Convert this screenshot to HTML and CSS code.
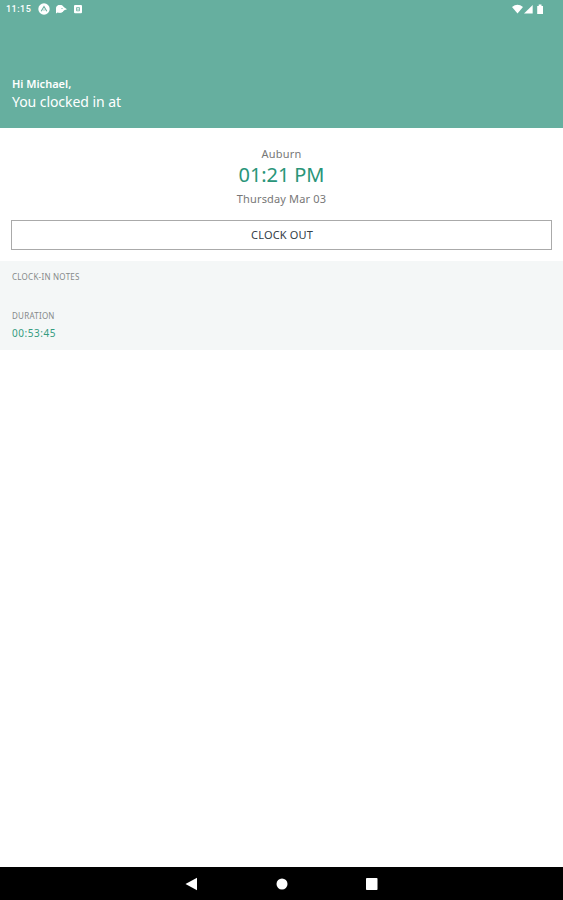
FILE: index.html
```html
<!DOCTYPE html>
<html lang="en">
<head>
<meta charset="utf-8">
<title>Time clock</title>
<link rel="stylesheet" href="styles.css">
</head>
<body>
<header class="header">
  <div class="status">
    <span class="clock">11:15</span>
    <svg class="notifications" width="46" height="12" viewBox="0 0 46 12">
      <circle cx="6" cy="6" r="5.7" fill="#fff"/>
      <path d="M3.2 8.2 6 3.5l2.8 4.7M6 6.6v.8" fill="none" stroke="#66af9f" stroke-width="1.1"/>
      <path d="M18 10.5V5.800a4 4 0 0 1 7.300-2.100L29 6.300 25.700 7.600A4 4 0 0 1 22 9.500h-2.500z" fill="#fff"/>
      <circle cx="22" cy="5.800" r="3.900" fill="#fff"/>
      <circle cx="24" cy="5.500" r=".6" fill="#66af9f"/>
      <rect x="36" y="2" width="8" height="8.300" rx="1" fill="#fff"/>
      <path d="M38.500 4.600h3v3.200h-3zM39.200 6.200h1.600" fill="none" stroke="#66af9f" stroke-width=".8"/>
    </svg>
    <svg class="system" width="33" height="12" viewBox="0 0 33 12">
      <path d="M0 4Q5.500-.4 11 4L5.500 10.500z" fill="#fff"/>
      <path d="M12 10.500 20.700 2v8.500z" fill="#fff"/>
      <path d="M25.200 3h1.500V1.500h2.800V3H31v8h-5.800z" fill="#fff"/>
    </svg>
  </div>
  <div class="greeting">
    <p class="hello">Hi Michael,</p>
    <p class="message">You clocked in at</p>
  </div>
</header>
<main class="main">
  <section class="shift">
    <p class="place">Auburn</p>
    <p class="time">01:21 PM</p>
    <p class="date">Thursday Mar 03</p>
    <button class="clock-out">CLOCK OUT</button>
  </section>
  <section class="details">
    <p class="label notes">CLOCK-IN NOTES</p>
    <p class="label">DURATION</p>
    <p class="duration">00:53:45</p>
  </section>
</main>
<nav class="nav">
  <svg width="14" height="14" viewBox="0 0 14 14"><path d="M.5 7 12 .8v12.400z" fill="#fff"/></svg>
  <svg width="14" height="14" viewBox="0 0 14 14"><circle cx="7" cy="7" r="5.500" fill="#fff"/></svg>
  <svg width="14" height="14" viewBox="0 0 14 14"><rect x="1" y="1" width="11.500" height="12" rx=".8" fill="#fff"/></svg>
</nav>
</body>
</html>
```
FILE: styles.css
```css
* { box-sizing: border-box; }
body {
  margin: 0;
  height: 900px;
  display: flex;
  flex-direction: column;
  background: #fff;
  font-family: "Noto Sans", sans-serif;
  overflow: hidden;
}
p { margin: 0; white-space: nowrap; }
svg { display: block; }
.header {
  height: 128px;
  background: #66af9f;
  color: #fff;
}
.status {
  display: flex;
  height: 18px;
  padding: 3px 18px 0 6px;
}
.clock {
  width: 32px;
  font: 500 9px/12px Roboto, sans-serif;
  letter-spacing: .5px;
}
.system { margin-left: auto; }
.greeting { padding: 58px 12px 0; }
.hello {
  font-size: 11px;
  line-height: 16px;
  font-weight: 600;
}
.message {
  font-size: 14px;
  line-height: 19px;
  letter-spacing: -.06px;
}
.main { flex: 1; }
.shift {
  height: 133px;
  padding: 17px 11px 0;
  text-align: center;
  color: #777;
}
.place { font-size: 11px; line-height: 17px; letter-spacing: .25px; }
.time {
  font-size: 20px;
  line-height: 26px;
  letter-spacing: -.1px;
  color: #299579;
}
.date { font-size: 11px; line-height: 22px; letter-spacing: .15px; }
.clock-out {
  display: block;
  width: 541px;
  height: 30px;
  margin-top: 10px;
  padding: 0 0 1px 1px;
  border: 1px solid #aaa;
  background: #fff;
  color: #344047;
  font: 11px "Noto Sans", sans-serif;
  letter-spacing: .15px;
}
.details {
  height: 89px;
  padding: 10px 12px 0;
  background: #f4f7f7;
}
.label {
  font-size: 8px;
  line-height: 12px;
  letter-spacing: .25px;
  color: #858989;
}
.notes { margin-bottom: 27px; }
.duration {
  font-size: 10px;
  line-height: 14px;
  letter-spacing: .55px;
  margin-top: 4px;
  color: #359c80;
}
.nav {
  height: 33px;
  display: flex;
  justify-content: center;
  align-items: center;
  gap: 76px;
  background: #000;
}
```
